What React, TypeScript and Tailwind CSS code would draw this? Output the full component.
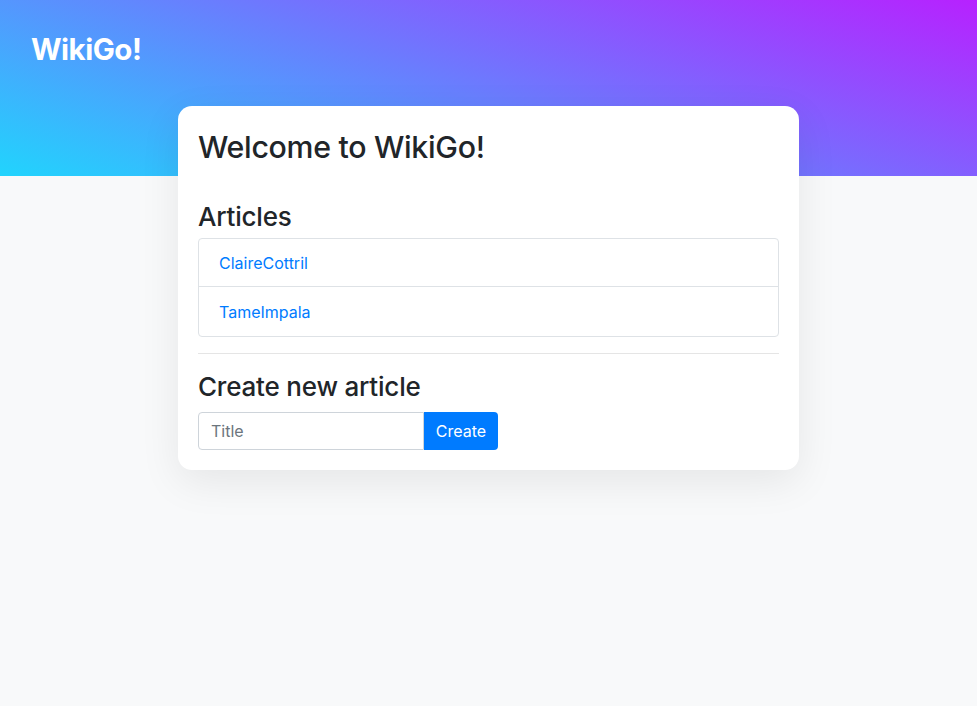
import React from "react";

export default function App() {
  return (
    <div className="min-h-[706px] bg-[#f8f9fa] text-[#212529]" style={{ fontFamily: "Inter, 'Noto Sans', sans-serif" }}>
      <header className="h-[176px] bg-[linear-gradient(19deg,#21D4FD_0%,#B721FF_100%)] px-[31px] pt-[28px]">
        <h1 className="text-[29.5px] font-bold leading-[42px] tracking-[-0.5px] text-white">WikiGo!</h1>
      </header>
      <main className="mx-auto -mt-[70px] w-[621px] rounded-[14px] bg-white px-5 pt-[22px] pb-5 shadow-[0_12px_40px_rgba(0,0,0,0.08)]">
        <h2 className="mb-[34px] text-[30.3px] font-medium leading-[38px] tracking-[-0.3px]">Welcome to WikiGo!</h2>
        <h3 className="mb-[4px] text-[26px] font-medium leading-[34px] tracking-[-0.2px]">Articles</h3>
        <ul className="rounded border border-[#dee2e6]">
          <li className="flex h-[48px] items-center border-b border-[#dee2e6] px-5">
            <a className="text-[16px] text-[#007bff]" href="#">ClaireCottril</a>
          </li>
          <li className="flex h-[49px] items-center px-5">
            <a className="text-[16px] text-[#007bff]" href="#">TameImpala</a>
          </li>
        </ul>
        <hr className="mt-4 mb-4 border-[#e5e5e5]" />
        <h3 className="mb-2 text-[26px] font-medium leading-[34px] tracking-[-0.2px]">Create new article</h3>
        <div className="flex h-[38px]">
          <input
            placeholder="Title"
            className="w-[226px] rounded-l border border-[#ced4da] px-3 text-[16px] text-[#495057] placeholder:text-[#6c757d] outline-none"
          />
          <button className="w-[74px] rounded-r bg-[#007bff] text-[16px] text-white">Create</button>
        </div>
      </main>
    </div>
  );
}
